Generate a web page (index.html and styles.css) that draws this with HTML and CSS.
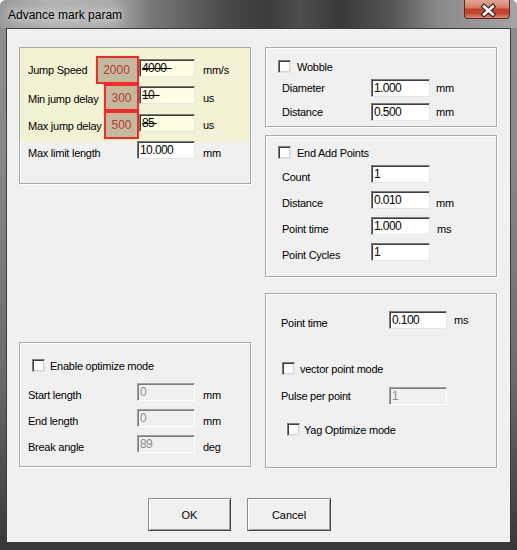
FILE: index.html
```html
<!DOCTYPE html>
<html>
<head>
<meta charset="utf-8">
<title>Advance mark param</title>
<link rel="stylesheet" href="styles.css">
</head>
<body>
<div class="window">
  <div class="titlebar">
    <span class="title">Advance mark param</span>
    <div class="close">
      <svg width="46" height="19" viewBox="0 0 46 19">
        <path d="M20.5 6.5 L29.5 14.5 M29.5 6.5 L20.5 14.5" stroke="#3b2a28" stroke-width="5" stroke-linecap="square" fill="none"/>
        <path d="M20.5 6.5 L29.5 14.5 M29.5 6.5 L20.5 14.5" stroke="#ffffff" stroke-width="2.6" stroke-linecap="square" fill="none"/>
      </svg>
    </div>
  </div>
  <div class="client">
    <div class="columns">
      <div class="col">
        <div class="group g-jump">
          <div class="highlight">
            <div class="jrow">
              <span class="lbl jl1">Jump Speed</span>
              <span class="mark mk1">2000</span>
              <span class="field hl f56 mt3"><s>4000&nbsp;&nbsp;</s></span>
              <span class="unit u8">mm/s</span>
            </div>
            <div class="jrow">
              <span class="lbl jl2">Min jump delay</span>
              <span class="mark mk2">300</span>
              <span class="field hl f56 mt2"><s>10&nbsp;&nbsp;</s></span>
              <span class="unit u8">us</span>
            </div>
            <div class="jrow">
              <span class="lbl jl2">Max jump delay</span>
              <span class="mark mk3">500</span>
              <span class="field hl f56 mt3"><s>85&nbsp;</s></span>
              <span class="unit u8">us</span>
            </div>
          </div>
          <div class="row limit">
            <span class="lbl w109 low">Max limit length</span>
            <span class="field f58">10.000</span>
            <span class="unit u8 low">mm</span>
          </div>
        </div>

        <div class="group g-opt">
          <label class="check c-opt"><span class="box"></span><span class="ctext">Enable optimize mode</span></label>
          <div class="row r-first">
            <span class="lbl w109 low">Start length</span>
            <span class="field f58 disabled">0</span>
            <span class="unit u8 low">mm</span>
          </div>
          <div class="row">
            <span class="lbl w109 low">End length</span>
            <span class="field f58 disabled">0</span>
            <span class="unit u8 low">mm</span>
          </div>
          <div class="row">
            <span class="lbl w109 low">Break angle</span>
            <span class="field f58 disabled">89</span>
            <span class="unit u8 low">deg</span>
          </div>
        </div>
      </div>

      <div class="col">
        <div class="group g-wobble">
          <label class="check c-wob"><span class="box"></span><span class="ctext">Wobble</span></label>
          <div class="row r-first">
            <span class="lbl w89">Diameter</span>
            <span class="field f59">1.000</span>
            <span class="unit u6">mm</span>
          </div>
          <div class="row">
            <span class="lbl w89">Distance</span>
            <span class="field f59">0.500</span>
            <span class="unit u6">mm</span>
          </div>
        </div>

        <div class="group g-end">
          <label class="check c-wob"><span class="box"></span><span class="ctext">End Add Points</span></label>
          <div class="row r-first">
            <span class="lbl w89 low">Count</span>
            <span class="field f59">1</span>
          </div>
          <div class="row">
            <span class="lbl w89 low">Distance</span>
            <span class="field f59">0.010</span>
            <span class="unit u6 low">mm</span>
          </div>
          <div class="row">
            <span class="lbl w89 low">Point time</span>
            <span class="field f59">1.000</span>
            <span class="unit u7 low">ms</span>
          </div>
          <div class="row">
            <span class="lbl w89 low">Point Cycles</span>
            <span class="field f59">1</span>
          </div>
        </div>

        <div class="group g-point">
          <div class="row r-pt">
            <span class="lbl w108 low">Point time</span>
            <span class="field f58">0.100</span>
            <span class="unit u7">ms</span>
          </div>
          <label class="check c-vec"><span class="box"></span><span class="ctext">vector point mode</span></label>
          <div class="row r-pulse">
            <span class="lbl w108">Pulse per point</span>
            <span class="field f58 disabled">1</span>
          </div>
          <label class="check c-yag"><span class="box"></span><span class="ctext">Yag Optimize mode</span></label>
        </div>
      </div>
    </div>

    <div class="buttons">
      <button class="btn b-ok">OK</button>
      <button class="btn b-cancel">Cancel</button>
    </div>
  </div>
</div>
</body>
</html>
```
FILE: styles.css
```css
body {
  margin: 0;
  background: #ffffff;
  font-family: "Liberation Sans", Arial, sans-serif;
}

.window {
  width: 517px;
  height: 550px;
  display: flex;
  flex-direction: column;
  border-radius: 6px 6px 0 0;
  overflow: hidden;
  background: linear-gradient(to bottom, #8f8f8f 0, #888888 160px, #6a6a6a 380px, #404040 520px, #363636 550px);
}

.titlebar {
  height: 28px;
  flex: none;
  display: flex;
  align-items: center;
  padding-left: 8px;
  box-sizing: border-box;
  background: linear-gradient(to right, #9a9a9a 0, #b3b3b3 50px, #acacac 110px, #7a7a7a 150px, #474747 230px, #3c3c3c 270px, #4e4e4e 300px, #393939 340px, #545454 390px, #8a8a8a 440px, #a4a4a4 517px);
}

.title {
  font-size: 12px;
  color: #000;
  text-shadow: 0 0 8px #e8e8e8, 0 0 10px #e0e0e0;
  padding-top: 1px;
}

.close {
  margin-left: auto;
  margin-right: 7px;
  align-self: flex-start;
  width: 46px;
  height: 19px;
  box-sizing: border-box;
  border: 1px solid #5a2b24;
  border-top: none;
  border-radius: 0 0 4px 4px;
  background: linear-gradient(to bottom, #e2a796 0, #d8806c 40%, #c2402a 52%, #c44a33 75%, #de8a70 100%);
  display: flex;
}

.close svg {
  display: block;
  margin-left: -1px;
}

.client {
  flex: 1;
  margin: 0 6px 7px 6px;
  background: #f0f0f0;
  border: 1px solid #3c3c3c;
  padding: 18px 0 0 12px;
  box-sizing: border-box;
}

.columns {
  display: grid;
  grid-template-columns: 232px 232px;
  column-gap: 14px;
  align-items: start;
}

.col {
  display: flex;
  flex-direction: column;
}

.group {
  box-sizing: border-box;
  border: 1px solid #a8a8a8;
  box-shadow: inset 1px 1px 0 #ffffff, 1px 1px 0 #ffffff;
}

/* text */
.lbl, .unit, .ctext {
  font-size: 11px;
  letter-spacing: -0.25px;
  color: #000;
  white-space: nowrap;
}

.low { padding-top: 5px; }

.w68 { width: 68px; }
.w89 { width: 89px; flex: none; }
.w108 { width: 108px; flex: none; }
.w109 { width: 109px; flex: none; }

.u6 { margin-left: 6px; }
.u7 { margin-left: 7px; }
.u8 { margin-left: 8px; }

/* fields */
.field {
  display: block;
  flex: none;
  box-sizing: border-box;
  height: 18px;
  padding-left: 2px;
  font-size: 12px;
  line-height: 16px;
  letter-spacing: -0.6px;
  color: #000;
  background: #ffffff;
  border: 1px solid;
  border-color: #7a7a7a #e6e6e6 #e6e6e6 #7a7a7a;
  box-shadow: inset 1px 1px 0 #3f3f3f;
  white-space: nowrap;
  overflow: hidden;
}

.f56 { width: 56px; }
.f58 { width: 58px; }
.f59 { width: 59px; }

.field.hl { background: #fefee4; }
.field.disabled {
  background: #f0f0f0;
  color: #8e8e8e;
  border-color: #a0a0a0 #ffffff #ffffff #a0a0a0;
  box-shadow: inset 1px 1px 0 #7c7c7c;
}

.field s { text-decoration: line-through; text-decoration-thickness: 1px; }

.mt2 { margin-top: 2px; }
.mt3 { margin-top: 3px; }

/* checkbox */
.check {
  display: flex;
  align-items: center;
  height: 13px;
}

.box {
  width: 13px;
  height: 13px;
  flex: none;
  box-sizing: border-box;
  background: #ffffff;
  border: 1px solid;
  border-color: #7d7d7d #e4e4e4 #e4e4e4 #7d7d7d;
  box-shadow: inset 1px 1px 0 #3f3f3f, inset -1px -1px 0 #d4d4d4;
}

/* rows */
.row {
  display: flex;
  align-items: center;
  height: 18px;
}

/* jump group */
.g-jump { height: 137px; }

.highlight {
  height: 94px;
  box-sizing: border-box;
  padding: 8px 0 0 8px;
  background: #f4f2d5;
}

.jrow {
  display: flex;
  align-items: flex-start;
}

.jrow .lbl { align-self: center; }
.jl1 { width: 68px; flex: none; }
.jl2 { width: 76px; flex: none; padding-top: 2px; }
.jrow .unit { align-self: center; }

.mark {
  box-sizing: border-box;
  flex: none;
  border: 2px solid #ff2626;
  background: #bfbb9c;
  color: #c5363a;
  font-size: 12px;
  display: flex;
  align-items: center;
  justify-content: center;
}

.mk1 { width: 43px; height: 28px; padding-right: 2px; }
.mk2 { width: 35px; height: 27px; }
.mk3 { width: 35px; height: 28px; }

.limit { margin-top: -1px; padding-left: 8px; }

/* optimize group */
.g-opt {
  height: 125px;
  margin-top: 158px;
  padding-top: 16px;
}

.c-opt { margin-left: 12px; }
.c-opt .ctext { margin-left: 5px; }

.g-opt .row { padding-left: 8px; margin-top: 8px; }
.g-opt .row.r-first { margin-top: 11px; }

/* wobble group */
.g-wobble {
  height: 80px;
  padding-top: 12px;
}

.c-wob { margin-left: 12px; }
.c-wob .ctext { margin-left: 6px; }

.g-wobble .row { padding-left: 16px; margin-top: 6px; }

/* end add points group */
.g-end {
  height: 142px;
  margin-top: 8px;
  padding-top: 10px;
}

.g-end .row { padding-left: 16px; margin-top: 8px; }
.g-end .row.r-first { margin-top: 6px; }

/* point group */
.g-point {
  height: 175px;
  margin-top: 16px;
  padding-top: 17px;
}

.r-pt { padding-left: 15px; }
.c-vec { margin-left: 16px; margin-top: 33px; }
.c-vec .ctext { margin-left: 5px; }
.r-pulse { padding-left: 15px; margin-top: 12px; }
.c-yag { margin-left: 21px; margin-top: 18px; }
.c-yag .ctext { margin-left: 4px; }

/* buttons */
.buttons {
  display: flex;
  gap: 16px;
  margin-top: 30px;
  padding-left: 129px;
}

.btn {
  height: 33px;
  box-sizing: border-box;
  font-family: "Liberation Sans", Arial, sans-serif;
  font-size: 11px;
  color: #000;
  background: #f0f0f0;
  border: 1px solid;
  border-color: #8c8c8c #444444 #444444 #8c8c8c;
  box-shadow: inset 1px 1px 0 #ffffff, inset -1px -1px 0 #a0a0a0;
  padding: 0;
}

.b-ok { width: 83px; }
.b-cancel { width: 84px; }
```
